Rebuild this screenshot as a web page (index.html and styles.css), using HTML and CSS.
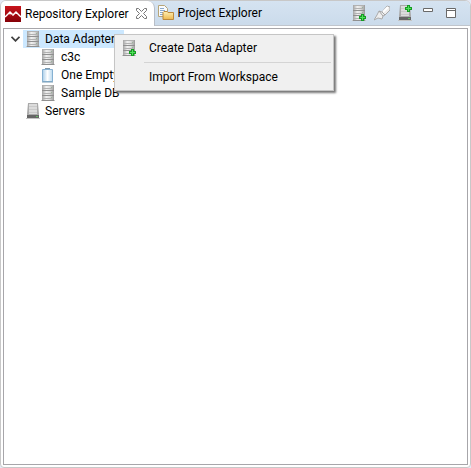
FILE: index.html
```html
<!DOCTYPE html>
<html lang="en">
<head>
<meta charset="utf-8">
<title>Repository Explorer</title>
<link rel="stylesheet" href="styles.css">
</head>
<body>
<svg class="defs" aria-hidden="true">
  <defs>
    <linearGradient id="metal"><stop offset="0" stop-color="#a2a2a2"/><stop offset=".35" stop-color="#f0f0f0"/><stop offset=".65" stop-color="#dddddd"/><stop offset="1" stop-color="#999999"/></linearGradient>
    <linearGradient id="glass"><stop offset="0" stop-color="#a9cde8"/><stop offset=".5" stop-color="#fff"/><stop offset="1" stop-color="#b9d8ee"/></linearGradient>
    <linearGradient id="folder" x2="0" y2="1"><stop offset="0" stop-color="#fff0b4"/><stop offset="1" stop-color="#edb84f"/></linearGradient>
    <linearGradient id="red" x2="0" y2="1"><stop offset="0" stop-color="#c8141c"/><stop offset="1" stop-color="#850008"/></linearGradient>
    <symbol id="rack" viewBox="0 0 16 16">
      <path fill="#c6c6c6" d="M1 15h14v1H1z"/>
      <path fill="url(#metal)" d="M2 0h12v15H2z"/>
      <path fill="#909090" d="M2 5h12v1H2zM2 10h12v1H2zM2 15h12v1H2z"/>
      <path fill="#b2b2b2" d="M3 0h10v1H3zM3 3h10v1H3zM3 8h10v1H3zM3 13h10v1H3z"/>
      <path fill="#9bb49b" d="M11 2h1v1h-1zM11 7h1v1h-1zM11 12h1v1h-1z"/>
    </symbol>
    <symbol id="plus" viewBox="0 0 7 7"><path fill="#159d22" d="M2 0h3v2h2v3H5v2H2V5H0V2h2z"/><path fill="#52e05c" d="M3 1h1v2h2v1H4v2H3V4H1V3h2z"/></symbol>
    <symbol id="server" viewBox="0 0 16 16">
      <path fill="#c4c4c4" d="M1 15h14v1H1z"/><path fill="#aaa" d="M3 0h10l1 11H2z"/>
      <path fill="#dcdcdc" d="M4 1h8v10H4z"/><path fill="#cacaca" d="M4 3h8v1H4zM4 6h8v1H4zM4 9h8v1H4z"/>
      <path fill="#666" d="M2 12h12v3H2z"/><path fill="#ababab" d="M2 11h12v1H2z"/><path fill="#65b965" d="M11 13h2v1h-2z"/>
    </symbol>
  </defs>
</svg>
<main class="view">
  <header class="bar">
    <div class="tabs" role="tablist">
      <div class="tab active">
        <svg class="icon" viewBox="0 0 16 16"><path fill="url(#red)" d="M0 0h16v16H0z"/><path d="M0 11l5-5 3 3 3-3 5 5" fill="none" stroke="#fff" stroke-width="1.5"/><path d="M4 8l2 1 1-1 1 2 3-3" fill="none" stroke="#e9a0a0" stroke-width=".6"/></svg>
        <button class="label" role="tab" aria-selected="true">Repository Explorer</button>
        <button class="close" aria-label="Close"><svg viewBox="0 0 11 11"><path d="M.5.5h2l3 3 3-3h2v2l-3 3 3 3v2h-2l-3-3-3 3h-2v-2l3-3-3-3z" fill="#fff" stroke="#777"/></svg></button>
      </div>
      <div class="tab">
        <svg class="icon" viewBox="0 0 16 16"><path d="M.5.5h6l3 3v8h-9z" fill="#f8fbff" stroke="#b7a578"/><path d="M2 3.500h4M2 5.500h5M2 7.500h3M2 9.500h3" stroke="#8ba9cc"/><path d="M5 14.500v-7l1-1h3l1 1h5.500v7z" fill="url(#folder)" stroke="#bd893d"/></svg>
        <button class="label" role="tab" aria-selected="false">Project Explorer</button>
      </div>
    </div>
    <div class="tools">
      <button class="tool" aria-label="Create Data Adapter"><svg class="icon" viewBox="0 0 16 16"><use href="#rack" width="16" height="16"/><use href="#plus" x="8" y="9" width="7" height="7"/></svg></button>
      <button class="tool" aria-label="Edit"><svg class="icon" viewBox="0 0 16 16"><path d="M0 15l3-5 2-4 3 1 5-6 3 1v3l-5 5-2 1-1 3-4-1z" fill="#eeeeee" stroke="#aaaaaa"/><path d="M5 6l4 5M8 7l3 3" stroke="#a5a5a5"/><path d="M9 7l5-5" stroke="#fff" stroke-width="2"/></svg></button>
      <button class="tool" aria-label="Create Server"><svg class="icon" viewBox="0 0 16 16"><use href="#server" width="16" height="16"/><use href="#plus" x="8" width="7" height="7"/></svg></button>
      <button class="tool" aria-label="Minimize"><svg class="icon" viewBox="0 0 16 16"><path d="M3.500 3.500h9v3h-9z" fill="#fff" stroke="#696969"/></svg></button>
      <button class="tool" aria-label="Maximize"><svg class="icon" viewBox="0 0 16 16"><path d="M3.500 3.500h9v9h-9zM3 5.500h10" fill="#fff" stroke="#696969"/></svg></button>
    </div>
  </header>
  <section class="content">
    <ul class="tree" role="tree">
      <li role="treeitem" aria-expanded="true">
        <div class="row"><svg class="arrow" viewBox="0 0 9 6"><path d="M.5.8l4 4 4-4" fill="none" stroke="#404040" stroke-width="1.800"/></svg><span class="item selected"><svg class="icon"><use href="#rack"/></svg><span>Data Adapters</span></span></div>
        <ul class="children" role="group">
          <li class="row" role="treeitem"><svg class="icon"><use href="#rack"/></svg><span>c3c</span></li>
          <li class="row" role="treeitem"><svg class="icon" viewBox="0 0 16 16"><path d="M2.500 2.500h10v12h-10z" fill="url(#glass)" stroke="#86b1d2"/><path d="M5 1h5v1H5z" fill="#7f98aa"/><path d="M2 15h11" stroke="#7a9eb8"/></svg><span>One Empty</span></li>
          <li class="row" role="treeitem"><svg class="icon"><use href="#rack"/></svg><span>Sample DB</span></li>
        </ul>
      </li>
      <li class="row root" role="treeitem"><svg class="icon"><use href="#server"/></svg><span>Servers</span></li>
    </ul>
    <div class="menu" role="menu">
      <button role="menuitem"><svg class="icon" viewBox="0 0 16 16"><use href="#rack" width="16" height="16"/><use href="#plus" x="8" y="9" width="7" height="7"/></svg><span>Create Data Adapter</span></button>
      <hr>
      <button role="menuitem"><span class="icon"></span><span>Import From Workspace</span></button>
    </div>
  </section>
</main>
</body>
</html>
```
FILE: styles.css
```css
* { box-sizing: border-box; }
body { margin: 0; background: #e4e9f5; color: #000; font: 12px/18px Roboto, sans-serif; }
button { margin: 0; padding: 0; border: 0; background: none; color: inherit; font: inherit; white-space: nowrap; }
ul { margin: 0; padding: 0; list-style: none; }
.defs { position: absolute; width: 0; height: 0; }
.icon { display: block; flex: none; width: 16px; height: 16px; }
.view { display: flex; flex-direction: column; height: 100vh; border: 1px solid #c8c8c8; border-radius: 6px 6px 4px 4px; background: #fff; overflow: hidden; }
.bar { display: flex; justify-content: space-between; flex: none; height: 25px; background: linear-gradient(#d5e3f1, #cbdbeb); border-bottom: 1px solid #c0c5cc; }
.tabs { display: flex; }
.tab { display: flex; align-items: center; gap: 4px; padding: 0 3px; }
.active { height: 25px; padding: 0 7px 0 4px; background: #fff; border-right: 1px solid #b9bec7; border-radius: 0 7px 0 0; }
.close { width: 11px; height: 11px; margin-left: 3px; }
.close svg { display: block; }
.tools { display: flex; align-items: center; gap: 7px; padding-right: 11px; }
.content { position: relative; flex: 1; margin: 2px; border: 1px solid #a7a6aa; background: #fff; }
.tree { padding: 1px 0 0 7px; }
.row { display: flex; align-items: center; gap: 4px; height: 18px; white-space: nowrap; }
.arrow { width: 9px; height: 6px; }
.children { padding-left: 29px; }
.children .row { gap: 5px; }
.root { padding-left: 14px; }
.item { display: flex; align-items: center; gap: 4px; padding: 0 3px 0 2px; margin-left: -1px; }
.selected { background: #cce8ff; }
.menu { position: absolute; left: 110px; top: 5px; width: 220px; padding: 2px; background: #f0f0f0; border: 1px solid #c5c5c5; box-shadow: 2px 2px 2px #777; }
.menu button { display: flex; align-items: center; gap: 12px; width: 100%; height: 22px; padding-left: 4px; }
.menu hr { height: 1px; margin: 3px 0 3px 27px; border: 0; background: #d4d4d4; }
```
